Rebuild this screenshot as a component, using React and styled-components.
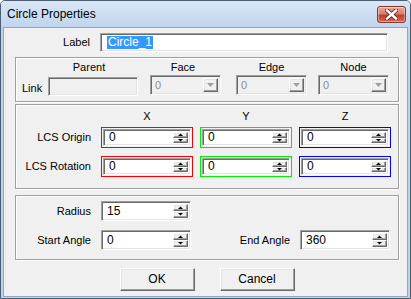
import React from "react";
import styled, { createGlobalStyle } from "styled-components";

const GlobalStyle = createGlobalStyle`
  html, body {
    margin: 0;
    padding: 0;
    background: #ffffff;
  }
  body {
    font-family: "Liberation Sans", Arial, sans-serif;
    font-size: 11px;
    line-height: 13px;
    color: #000;
  }
`;

const Window = styled.div`
  width: 411px;
  height: 299px;
  box-sizing: border-box;
  display: flex;
  flex-direction: column;
  border: 1px solid #4a5d73;
  border-radius: 5px 5px 0 0;
  background: #bcd3ee;
  padding: 0 2px 1px;
`;

const TitleBar = styled.div`
  height: 26px;
  display: flex;
  align-items: center;
  padding: 0 4px 0 6px;
  margin: 0 -2px;
  border-radius: 4px 4px 0 0;
  background: linear-gradient(#dae7f6, #bfd4ee);
`;

const Title = styled.div`
  font-size: 12px;
  color: #000;
`;

const CloseButton = styled.div`
  margin-left: auto;
  width: 29px;
  height: 17px;
  box-sizing: border-box;
  display: flex;
  align-items: center;
  justify-content: center;
  border: 1px solid #7c3a30;
  border-radius: 3px;
  background: linear-gradient(#e9a898 0%, #d7806f 45%, #c23f2a 55%, #d26a55 100%);
  box-shadow: inset 0 0 0 1px rgba(255, 255, 255, 0.4);
`;

const Client = styled.div`
  flex: 1;
  display: flex;
  flex-direction: column;
  background: #f0f0f0;
  border: 1px solid #8ea7c6;
  padding: 5px 8px 0 11px;
`;

const FieldRow = styled.div`
  display: grid;
  grid-template-columns: 78px 288px;
  column-gap: 7px;
  align-items: center;
  height: 19px;
`;

const Caption = styled.div`
  text-align: right;
  padding-right: 3px;
  white-space: nowrap;
  height: 13px;
`;

const Group = styled.div`
  box-sizing: border-box;
  height: ${(p) => p.$h}px;
  margin-top: ${(p) => p.$mt}px;
  border: 1px solid #a0a0a0;
  box-shadow: inset 1px 1px 0 #fff, 1px 1px 0 #fff;
  padding-top: ${(p) => p.$pt}px;
`;

const sunken = `
  box-sizing: border-box;
  border: 1px solid;
  border-color: #a0a0a0 #ffffff #ffffff #a0a0a0;
  box-shadow: inset 1px 1px 0 #696969, inset -1px -1px 0 #e3e3e3;
`;

const raised = `
  box-sizing: border-box;
  background: #f0f0f0;
  border: 1px solid;
  border-color: #ffffff #696969 #696969 #ffffff;
  box-shadow: inset -1px -1px 0 #a0a0a0, inset 1px 1px 0 #e3e3e3;
`;

const TextEdit = styled.div`
  ${sunken}
  height: ${(p) => p.$h}px;
  margin-top: ${(p) => p.$mt || 0}px;
  background: ${(p) => (p.$disabled ? "#f0f0f0" : "#fff")};
  display: flex;
  align-items: center;
  padding-left: 6px;
`;

const Selected = styled.span`
  background: #3399ff;
  color: #fff;
  line-height: 13px;
  font-size: 12px;
  padding: 0 1px;
`;

/* link group */
const LinkRow = styled.div`
  display: flex;
  padding-left: 6px;
`;

const LinkColumn = styled.div`
  display: flex;
  flex-direction: column;
  width: ${(p) => p.$w}px;
  margin-left: ${(p) => p.$ml || 0}px;
`;

const ColumnHead = styled.div`
  height: 13px;
  text-align: center;
  padding-right: ${(p) => p.$shift || 0}px;
  margin-bottom: 1px;
`;

const LinkLabel = styled.div`
  height: 20px;
  display: flex;
  align-items: center;
  padding-top: 3px;
`;

const Combo = styled.div`
  ${sunken}
  height: 20px;
  background: #f0f0f0;
  display: flex;
  padding: 2px;
`;

const ComboText = styled.div`
  flex: 1;
  color: #8d8d8d;
  padding-left: 2px;
  line-height: 15px;
`;

const DropButton = styled.div`
  ${raised}
  width: 15px;
  display: flex;
  align-items: center;
  justify-content: center;
`;

/* LCS group */
const AxisRow = styled.div`
  display: grid;
  grid-template-columns: 78px 92px 92px 92px;
  column-gap: 7px;
  height: ${(p) => p.$h}px;
  margin-top: ${(p) => p.$mt || 0}px;
  align-items: center;
`;

const AxisHead = styled.div`
  text-align: center;
  height: 13px;
`;

const ColorFrame = styled.div`
  position: relative;
  z-index: 1;
  box-sizing: border-box;
  height: 21px;
  padding: 1px;
  display: flex;
  background: #f0f0f0;
  box-shadow: inset 0 0 0 1px ${(p) => p.$color};
`;

const SpinBox = styled.div`
  ${sunken}
  flex: 1;
  height: ${(p) => (p.$h ? `${p.$h}px` : "auto")};
  margin: ${(p) => (p.$h ? 0 : 1)}px;
  background: #fff;
  display: flex;
  padding: 2px 2px 2px 0;
`;

const SpinValue = styled.div`
  flex: 1;
  padding-left: 5px;
  display: flex;
  align-items: center;
  font-size: 12px;
`;

const SpinButtons = styled.div`
  width: 15px;
  display: flex;
  flex-direction: column;
`;

const SpinButton = styled.div`
  ${raised}
  flex: 1;
  display: flex;
  align-items: center;
  justify-content: center;
`;

/* arc group */
const ArcGrid = styled.div`
  display: grid;
  grid-template-columns: 78px 90px 95px 90px;
  grid-template-rows: 20px 20px;
  column-gap: 7px;
  row-gap: 9px;
  align-items: center;
`;

const ButtonRow = styled.div`
  display: flex;
  justify-content: center;
  gap: 25px;
  margin-top: 8px;
`;

const PushButton = styled.div`
  ${raised}
  width: 75px;
  height: 23px;
  display: flex;
  align-items: center;
  justify-content: center;
  font-size: 12px;
`;

const SmallArrow = ({ up }) => (
  <svg width="5" height="3" viewBox="0 0 5 3">
    <polygon points={up ? "0,3 5,3 2.5,0.5" : "0,0 5,0 2.5,2.5"} fill="#000" />
  </svg>
);

const DropArrow = () => (
  <svg width="7" height="4" viewBox="0 0 7 4">
    <polygon points="0,0 7,0 3.5,4" fill="#a0a0a0" />
  </svg>
);

const Spin = ({ value, h }) => (
  <SpinBox $h={h}>
    <SpinValue>{value}</SpinValue>
    <SpinButtons>
      <SpinButton>
        <SmallArrow up />
      </SpinButton>
      <SpinButton>
        <SmallArrow />
      </SpinButton>
    </SpinButtons>
  </SpinBox>
);

const ColorSpin = ({ color, value }) => (
  <ColorFrame $color={color}>
    <Spin value={value} />
  </ColorFrame>
);

const ComboBox = () => (
  <Combo>
    <ComboText>0</ComboText>
    <DropButton>
      <DropArrow />
    </DropButton>
  </Combo>
);

const axes = ["#ff0000", "#00ee00", "#0000ff"];

export default function App() {
  return (
    <>
      <GlobalStyle />
      <Window>
        <TitleBar>
          <Title>Circle Properties</Title>
          <CloseButton>
            <svg width="13" height="11" viewBox="0 0 13 11">
              <path d="M2 1.5 L11 9.5 M11 1.5 L2 9.5" stroke="#5a2a24" strokeWidth="4.2" strokeLinecap="square" />
              <path d="M2 1.5 L11 9.5 M11 1.5 L2 9.5" stroke="#fff" strokeWidth="2.4" strokeLinecap="square" />
            </svg>
          </CloseButton>
        </TitleBar>
        <Client>
          <FieldRow>
            <Caption>Label</Caption>
            <TextEdit $h={19}>
              <Selected>Circle_1</Selected>
            </TextEdit>
          </FieldRow>

          <Group $h={45} $mt={5} $pt={3}>
            <LinkRow>
              <LinkColumn $w={26}>
                <ColumnHead />
                <LinkLabel>Link</LinkLabel>
              </LinkColumn>
              <LinkColumn $w={90}>
                <ColumnHead $shift={8}>Parent</ColumnHead>
                <TextEdit $h={19} $mt={2} $disabled />
              </LinkColumn>
              <LinkColumn $w={71} $ml={12}>
                <ColumnHead $shift={5}>Face</ColumnHead>
                <ComboBox />
              </LinkColumn>
              <LinkColumn $w={71} $ml={15}>
                <ColumnHead>Edge</ColumnHead>
                <ComboBox />
              </LinkColumn>
              <LinkColumn $w={71} $ml={11}>
                <ColumnHead>Node</ColumnHead>
                <ComboBox />
              </LinkColumn>
            </LinkRow>
          </Group>

          <Group $h={85} $mt={2} $pt={5}>
            <AxisRow $h={13}>
              <div />
              <AxisHead>X</AxisHead>
              <AxisHead>Y</AxisHead>
              <AxisHead>Z</AxisHead>
            </AxisRow>
            <AxisRow $h={21} $mt={4}>
              <Caption>LCS Origin</Caption>
              {axes.map((c) => (
                <ColorSpin key={c} color={c} value="0" />
              ))}
            </AxisRow>
            <AxisRow $h={21} $mt={8}>
              <Caption>LCS Rotation</Caption>
              {axes.map((c) => (
                <ColorSpin key={c} color={c} value="0" />
              ))}
            </AxisRow>
          </Group>

          <Group $h={65} $mt={6} $pt={5}>
            <ArcGrid>
              <Caption>Radius</Caption>
              <Spin value="15" h={20} />
              <div />
              <div />
              <Caption>Start Angle</Caption>
              <Spin value="0" h={20} />
              <Caption>End Angle</Caption>
              <Spin value="360" h={20} />
            </ArcGrid>
          </Group>

          <ButtonRow>
            <PushButton>OK</PushButton>
            <PushButton>Cancel</PushButton>
          </ButtonRow>
        </Client>
      </Window>
    </>
  );
}
